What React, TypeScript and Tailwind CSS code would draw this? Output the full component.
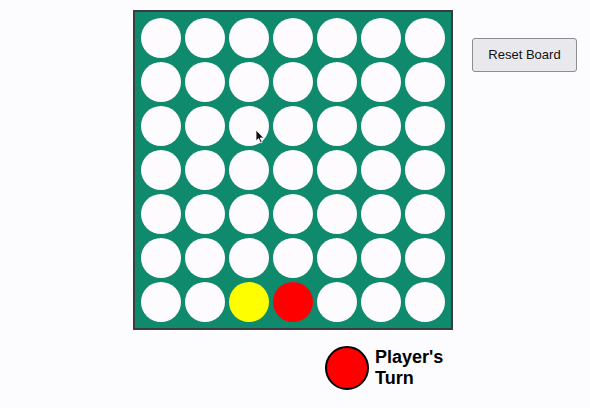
import React from "react";

const ROWS = 6;
const COLS = 7;

// bottom row: yellow at col 2, red at col 3
const board: (null | "red" | "yellow")[][] = Array.from({ length: ROWS + 1 }, (_, r) =>
	Array.from({ length: COLS }, (_, c) => {
		if (r === ROWS && c === 2) return "yellow";
		if (r === ROWS && c === 3) return "red";
		return null;
	})
);

const cellColor = (v: null | "red" | "yellow") => {
	if (v === "red") return "bg-[#fe0000]";
	if (v === "yellow") return "bg-[#fefe00]";
	return "bg-[#fdfbfe]";
};

export default function App() {
	return (
		<div
			className="relative w-full h-[408px] bg-[#fcfbfd] overflow-hidden"
			style={{ fontFamily: '"Liberation Sans", Arial, sans-serif' }}
		>
			<div className="flex items-start pt-[10px] pl-[133px]">
				<div className="border-2 border-[#3a3d3c] bg-[#0f8a6c] p-[4px]">
					<div className="grid grid-cols-7">
						{board.map((row, r) =>
							row.map((v, c) => (
								<div key={`${r}-${c}`} className="p-[2px]">
									<div className={`w-[40px] h-[40px] rounded-full ${cellColor(v)}`}></div>
								</div>
							))
						)}
					</div>
				</div>

				<button className="ml-[19px] mt-[28px] w-[105px] h-[34px] bg-[#e9e9ed] border border-[#8d8d8f] rounded-[3px] text-[13px] text-[#111]">
					Reset Board
				</button>
			</div>

			<div className="flex items-center pl-[325px] mt-[16px]">
				<div className="w-[44px] h-[44px] rounded-full bg-[#fe0000] border-2 border-black"></div>
				<div className="ml-[6px] text-[18px] font-bold leading-[21px] text-black">
					Player's
					<br />
					Turn
				</div>
			</div>

			{/* mouse pointer */}
			<svg className="absolute left-[255px] top-[129px]" width="10" height="15" viewBox="0 0 10 15">
				<path d="M1 1 L1 12 L3.6 9.6 L5.6 14 L7.2 13.3 L5.3 9 L8.8 9 Z" fill="#111" stroke="#fff" strokeWidth="0.8" />
			</svg>
		</div>
	);
}
